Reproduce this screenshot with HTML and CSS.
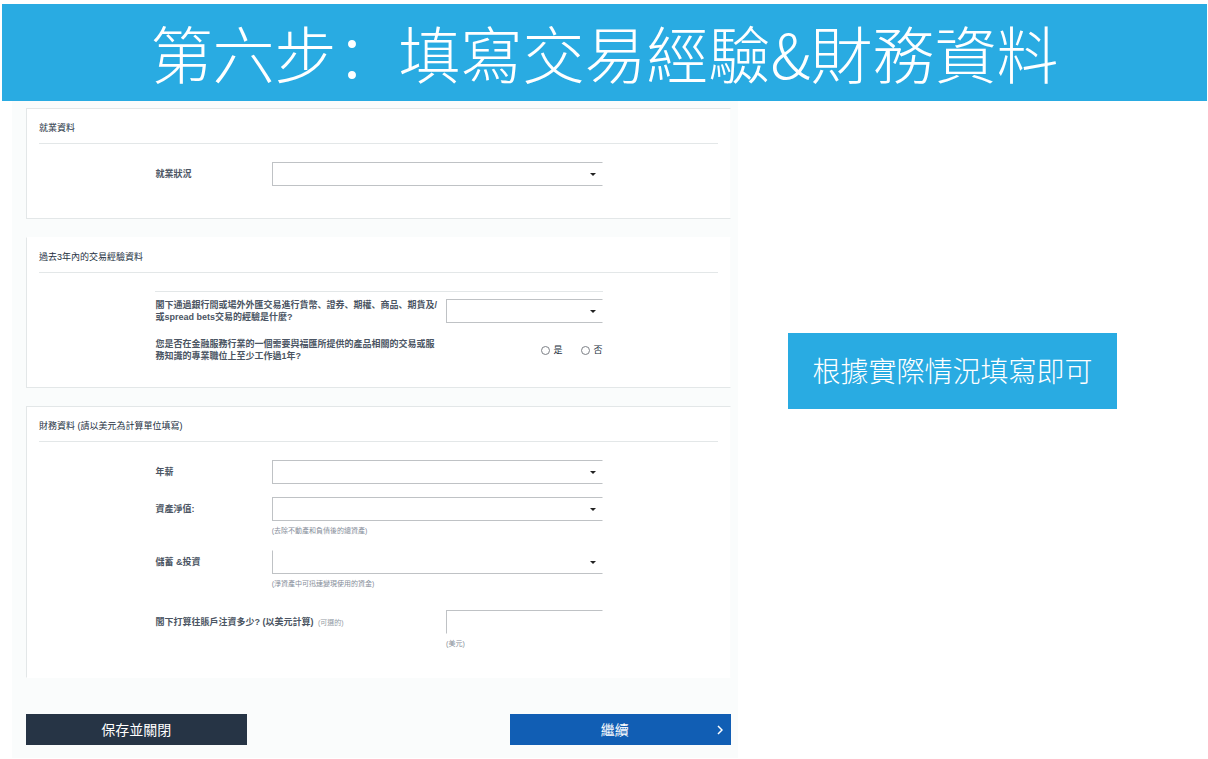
FILE: index.html
```html
<!DOCTYPE html>
<html lang="zh-Hant">
<head>
<meta charset="utf-8">
<meta name="viewport" content="width=device-width, initial-scale=1">
<title>填寫交易經驗&amp;財務資料</title>
<link rel="stylesheet" href="styles.css">
</head>
<body>
<header class="banner">
  <h1 class="banner-title">第六步<span class="colon" lang="zh-Hans">：</span>填寫交易經驗&amp;財務資料</h1>
</header>
<main class="layout">
  <form class="panel">
    <section class="card card-employment">
      <h2 class="card-title">就業資料</h2>
      <div class="fields">
        <div class="row">
          <label class="label" for="employment">就業狀況</label>
          <span class="picker"><select class="control" id="employment"><option></option></select></span>
        </div>
      </div>
    </section>

    <section class="card card-experience">
      <h2 class="card-title">過去3年內的交易經驗資料</h2>
      <div class="fields">
        <div class="row row-wide row-ruled">
          <label class="label" for="experience" lang="zh-Hans">閣下通過銀行間或場外外匯交易進行貨幣、證券、期權、商品、期貨及/<br>或spread bets交易的經驗是什麼?</label>
          <span class="picker"><select class="control" id="experience"><option></option></select></span>
        </div>
        <div class="row row-wide" role="radiogroup" aria-labelledby="job-label">
          <span class="label" id="job-label">您是否在金融服務行業的一個需要與福匯所提供的產品相關的交易或服<br>務知識的專業職位上至少工作過1年?</span>
          <div class="choices">
            <label class="choice"><input class="radio" type="radio" name="job">是</label>
            <label class="choice"><input class="radio" type="radio" name="job">否</label>
          </div>
        </div>
      </div>
    </section>

    <section class="card card-finance">
      <h2 class="card-title">財務資料 (請以美元為計算單位填寫)</h2>
      <div class="fields">
        <div class="row">
          <label class="label" for="income">年薪</label>
          <span class="picker"><select class="control" id="income"><option></option></select></span>
        </div>
        <div class="row">
          <label class="label" for="networth">資產淨值:</label>
          <span class="picker"><select class="control" id="networth"><option></option></select></span>
          <small class="hint">(去除不動產和負債後的總資產)</small>
        </div>
        <div class="row">
          <label class="label" for="savings">儲蓄 &amp;投資</label>
          <span class="picker"><select class="control control-open-top" id="savings"><option></option></select></span>
          <small class="hint">(淨資產中可迅速變現使用的資金)</small>
        </div>
        <div class="row row-wide row-amount">
          <label class="label" for="amount">閣下打算往賬戶注資多少? (以美元計算) <span class="optional">(可選的)</span></label>
          <input class="control control-open-bottom" id="amount" type="text">
          <small class="hint">(美元)</small>
        </div>
      </div>
    </section>

    <div class="actions">
      <button class="button button-save" type="button">保存並關閉</button>
      <button class="button button-next" type="submit">繼續
        <svg class="chevron" viewBox="0 0 6 10" aria-hidden="true"><path d="M1 1l4 4-4 4"/></svg>
      </button>
    </div>
  </form>
  <aside class="side">
    <p class="note">根據實際情況填寫即可</p>
  </aside>
</main>
</body>
</html>
```
FILE: styles.css
```css
* {
  box-sizing: border-box;
}

body {
  margin: 0;
  background: #fff;
  color: #232f3e;
  font-family: "Liberation Sans", "Noto Sans CJK TC", sans-serif;
  font-size: 9px;
}

.banner {
  margin: 4px 1px 0 2px;
  padding: 4px 0 5px;
  background: #29abe2;
  color: #fff;
  text-align: center;
}

.banner-title {
  margin: 0;
  font-family: "Noto Sans CJK TC", sans-serif;
  font-size: 62px;
  font-weight: 300;
  line-height: 88px;
}

.colon {
  font-family: "Noto Sans CJK SC", sans-serif;
}

.layout {
  display: grid;
  grid-template-columns: minmax(0, 738fr) minmax(0, 470fr);
}

.panel {
  margin-left: 12px;
  padding: 7px 7px 13px 14px;
  background: #fafcfc;
}

.card {
  margin-bottom: 18px;
  padding: 0 12px;
  border: 1px solid #e3e7e8;
  border-right-color: #fbfcfc;
  background: #fff;
}

.card-employment {
  padding-bottom: 32px;
}

.card-experience {
  padding-bottom: 25px;
  border-top-color: #fff;
}

.card-finance {
  margin-bottom: 36px;
  padding-bottom: 27px;
  border-bottom-color: #fff;
}

.card-title {
  margin: 0;
  padding: 12px 0 8px;
  border-bottom: 1px solid #e3e7e8;
  font-size: 9px;
  font-weight: 400;
  line-height: 14px;
}

.fields {
  display: grid;
  gap: 13px;
  margin: 18px 17% 0 calc(17% + 1px);
}

.card-experience .fields {
  gap: 15px;
}

.row {
  display: grid;
  grid-template-columns: 26% 74%;
  align-items: center;
}

.row-wide {
  grid-template-columns: 65% 35%;
}

.row-ruled {
  padding-top: 7px;
  border-top: 1px solid #e3e7e8;
}

.row-amount {
  margin-top: 7px;
}

.label {
  color: #4b5563;
  font-weight: 700;
  line-height: 12px;
  white-space: nowrap;
}

.label:lang(zh-Hans) {
  font-family: "Liberation Sans", "Noto Sans CJK SC", sans-serif;
}

.optional {
  margin-left: 2px;
  color: #949ba5;
  font-size: 7px;
  font-weight: 400;
}

.hint {
  grid-column: 2;
  margin-top: 4px;
  color: #858d99;
  font-size: 7px;
  line-height: 12px;
}

.picker {
  position: relative;
  display: block;
}

.picker::after {
  content: "";
  position: absolute;
  top: 11px;
  right: 7px;
  border: 3px solid transparent;
  border-top-color: #222;
  border-bottom: 0;
  pointer-events: none;
}

.control {
  display: block;
  width: 100%;
  height: 24px;
  margin: 0;
  padding: 0 16px 0 6px;
  border: 1px solid #bfc2c5;
  border-radius: 0;
  border-right-color: #fff;
  background: #fff;
  color: inherit;
  font: inherit;
  appearance: none;
}

.control-open-top {
  border-top-color: #fff;
}

.control-open-bottom {
  border-bottom-color: #fff;
}

.choices {
  display: flex;
  justify-content: flex-end;
  gap: 18px;
}

.choice {
  display: flex;
  align-items: center;
  gap: 4px;
  line-height: 12px;
}

.radio {
  width: 9px;
  height: 9px;
  margin: 0;
  border: 1px solid #7d8187;
  border-radius: 50%;
  background: #fff;
  appearance: none;
}

.radio:checked {
  border-width: 3px;
}

.actions {
  display: flex;
  justify-content: space-between;
}

.button {
  position: relative;
  width: calc(31% + 2px);
  min-width: 120px;
  min-height: 31px;
  padding: 0;
  border: 0;
  color: #fff;
  font-family: inherit;
  font-size: 14px;
  line-height: 20px;
}

.button-save {
  background: #263445;
}

.button-next {
  padding-right: 12px;
  background: #115eb4;
}

.chevron {
  position: absolute;
  top: 11px;
  right: 8px;
  width: 6px;
  height: 10px;
  fill: none;
  stroke: #fff;
  stroke-width: 1.5;
}

.side {
  padding: 232px 91px 0 50px;
}

.note {
  margin: 0;
  padding: 17px 0 19px;
  background: #29abe2;
  color: #fff;
  font-family: "Noto Sans CJK TC", sans-serif;
  font-size: 28px;
  font-weight: 300;
  line-height: 40px;
  text-align: center;
}
```
